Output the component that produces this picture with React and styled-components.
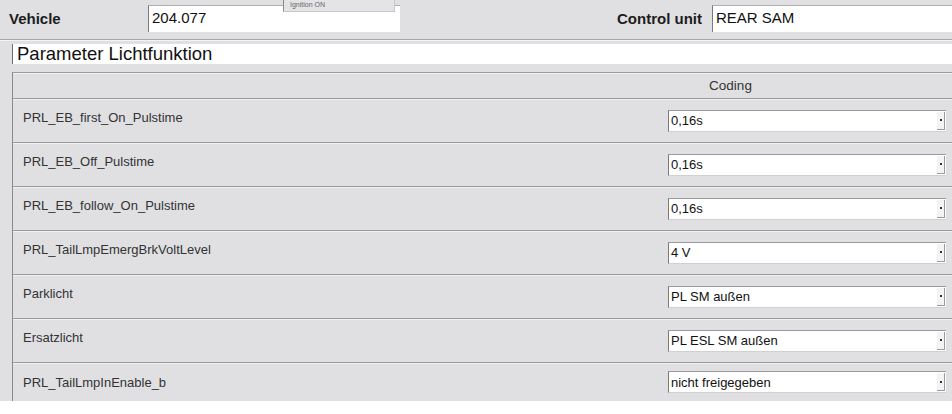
import React from "react";
import styled, { createGlobalStyle } from "styled-components";

const Global = createGlobalStyle`
  html, body { margin: 0; padding: 0; background: #ffffff; }
  body { font-family: "Liberation Sans", Arial, sans-serif; color: #222; }
`;

const Page = styled.div`
  width: 952px;
  height: 401px;
  background: #e0e0e3;
  overflow: hidden;
  position: relative;
`;

const TopBar = styled.div`
  height: 40px;
  display: flex;
  align-items: flex-start;
  padding-top: 5px;
  box-sizing: border-box;
  border-bottom: 1px solid #a6a6aa;
  box-shadow: 0 1px 0 #f4f4f6;
`;

const Label = styled.div`
  font-weight: bold;
  font-size: 15px;
  line-height: 27px;
  color: #1c1c1c;
  width: ${(p) => p.$w}px;
  text-align: ${(p) => p.$align || "left"};
  padding: ${(p) => p.$pad || "0"};
  box-sizing: border-box;
  flex-shrink: 0;
`;

const Field = styled.div`
  background: #fff;
  height: 27px;
  line-height: 24px;
  width: ${(p) => p.$w}px;
  box-sizing: border-box;
  border-left: 1px solid #7a7a7a;
  border-top: 1px solid #b0b0b0;
  padding-left: 3px;
  font-size: 15px;
  color: #111;
  flex-shrink: 0;
`;

const Spacer = styled.div`
  flex: 1;
`;

const Tip = styled.div`
  position: absolute;
  left: 283px;
  top: 0;
  width: 112px;
  height: 12px;
  background: #e4e4e6;
  border-left: 1px solid #8a8a8a;
  border-right: 1px solid #c8c8c8;
  border-bottom: 1px solid #c8c8c8;
  font-size: 7px;
  line-height: 9px;
  padding-left: 6px;
  box-sizing: border-box;
  color: #666;
`;

const Section = styled.div`
  padding: 4px 0 0 12px;
`;

const Title = styled.div`
  background: #fff;
  height: 20px;
  line-height: 20px;
  font-size: 18.5px;
  padding-left: 4px;
  border-left: 1px solid #6e6e6e;
  color: #111;
`;

const Table = styled.div`
  margin: 8px 0 0 12px;
  border-left: 1px solid #8a8a8e;
`;

const Row = styled.div`
  display: grid;
  grid-template-columns: 496px 1fr;
  height: ${(p) => p.$h}px;
  box-sizing: border-box;
  border-top: 1px solid #9c9ca0;
  box-shadow: inset 0 1px 0 #f0f0f2;
  align-items: center;
`;

const Cell = styled.div`
  font-size: 13px;
  color: #333;
  padding-left: ${(p) => p.$pl || 0}px;
  padding-bottom: ${(p) => p.$pb || 0}px;
  display: flex;
  justify-content: ${(p) => p.$justify || "flex-start"};
  align-items: center;
`;

const HeaderText = styled.span`
  font-size: 13.5px;
  color: #333;
`;

const Select = styled.div`
  width: 278px;
  height: 22px;
  margin-right: 6px;
  background: #fff;
  border-left: 1px solid #7a7a7a;
  border-top: 1px solid #9a9a9a;
  border-bottom: 1px solid #d0d0d0;
  box-sizing: border-box;
  display: flex;
  align-items: center;
  font-size: 13px;
  color: #111;
`;

const SelectText = styled.div`
  flex: 1;
  padding-left: 2px;
`;

const Arrow = styled.div`
  width: 8px;
  height: 18px;
  margin-right: 1px;
  border-right: 1px solid #9a9a9a;
  border-bottom: 1px solid #9a9a9a;
  background: #f4f4f4;
  display: flex;
  align-items: center;
  justify-content: center;
  box-sizing: border-box;
`;

const ArrowMark = styled.div`
  width: 2px;
  height: 2px;
  background: #333;
`;

const rows = [
  ["PRL_EB_first_On_Pulstime", "0,16s"],
  ["PRL_EB_Off_Pulstime", "0,16s"],
  ["PRL_EB_follow_On_Pulstime", "0,16s"],
  ["PRL_TailLmpEmergBrkVoltLevel", "4 V"],
  ["Parklicht", "PL SM außen"],
  ["Ersatzlicht", "PL ESL SM außen"],
  ["PRL_TailLmpInEnable_b", "nicht freigegeben"],
];

export default function App() {
  return (
    <>
      <Global />
      <Page>
        <TopBar>
          <Label $w={148} $pad="0 0 0 9px">Vehicle</Label>
          <Field $w={252}>204.077</Field>
          <Spacer />
          <Label $w={200} $align="right" $pad="0 10px 0 0">Control unit</Label>
          <Field $w={240}>REAR SAM</Field>
        </TopBar>
        <Tip>Ignition ON</Tip>
        <Section>
          <Title>Parameter Lichtfunktion</Title>
        </Section>
        <Table>
          <Row $h={26}>
            <Cell />
            <Cell $justify="center">
              <HeaderText>Coding</HeaderText>
            </Cell>
          </Row>
          {rows.map(([name, value], i) => (
            <Row key={i} $h={i === rows.length - 1 ? 39 : 44}>
              <Cell $pl={10} $pb={i === rows.length - 1 ? 0 : 6}>{name}</Cell>
              <Cell $justify="flex-end">
                <Select>
                  <SelectText>{value}</SelectText>
                  <Arrow>
                    <ArrowMark />
                  </Arrow>
                </Select>
              </Cell>
            </Row>
          ))}
        </Table>
      </Page>
    </>
  );
}
